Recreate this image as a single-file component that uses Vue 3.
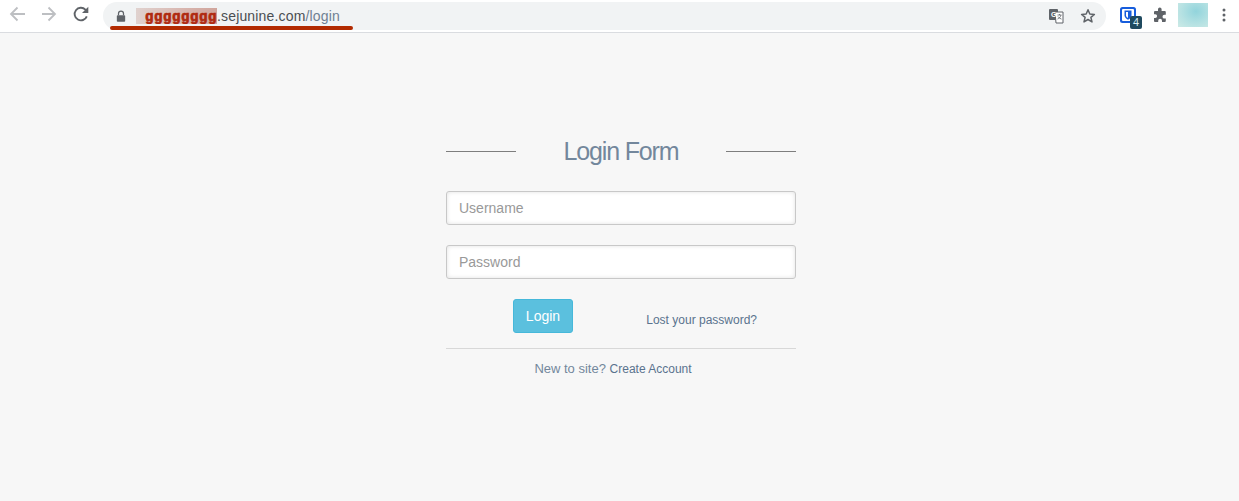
<template>
  <div class="page">
    <header class="toolbar">
      <div class="nav">
        <svg viewBox="0 0 18 18" width="18" height="18"><path d="M17 9H4M9.500 2.500L3 9l6.500 6.500" fill="none" stroke="#bdbfc2" stroke-width="1.800"/></svg>
        <svg viewBox="0 0 18 18" width="18" height="18"><path d="M2 9h13M8.500 2.500L15 9l-6.500 6.500" fill="none" stroke="#bdbfc2" stroke-width="1.800"/></svg>
        <svg viewBox="0 0 18 18" width="18" height="18"><path d="M14.800 11.400A6.300 6.300 0 1 1 13.400 4.600L15 6.200" fill="none" stroke="#5f6368" stroke-width="1.900"/><path d="M16.300 1.800V8H10z" fill="#5f6368"/></svg>
      </div>
      <div class="omnibox">
        <div class="url">
          <svg class="lock" viewBox="0 0 12 14" width="10" height="12"><path d="M3 6V4a3 3 0 0 1 6 0v2" fill="none" stroke="#5f6368" stroke-width="1.500"/><rect x="1" y="6" width="10" height="8" rx="1" fill="#5f6368"/></svg>
          <span class="mask"><span class="mask-text">gggggggg</span></span><span class="host">.sejunine.com</span><span class="path">/login</span>
        </div>
        <div class="omni-actions">
          <svg viewBox="0 0 16 16" width="16" height="16"><rect x="1" y="1" width="9" height="11" rx="1" fill="#5f6368"/><path d="M7 4h8v11H8z" fill="#fff" stroke="#5f6368"/><text x="3" y="9" class="tr-a">G</text><path d="M9.500 7h4M11.500 6v1M13 7c-.4 2-1.800 3.500-3.500 4M10 8.500c.8 1.300 2 2.200 3.500 2.600" fill="none" stroke="#5f6368" stroke-width=".8"/></svg>
          <svg viewBox="0 0 16 16" width="16" height="16"><path d="M8 1.800l1.800 4.200 4.600.4-3.500 3 1.100 4.500L8 11.500l-4 2.400 1.100-4.500-3.500-3 4.600-.4z" fill="none" stroke="#5f6368" stroke-width="1.500" stroke-linejoin="round"/></svg>
        </div>
      </div>
      <div class="extensions">
        <div class="shield-wrap">
          <svg viewBox="0 0 16 16" width="16" height="16"><rect width="16" height="16" rx="2.500" fill="#175ddc"/><rect x="2" y="2" width="12" height="12" rx="1" fill="#fff"/><path d="M4.500 3.500h7v5c0 2-1.800 3.300-3.500 4.200-1.700-.9-3.500-2.200-3.500-4.200z" fill="#175ddc"/><path d="M6 5h2v6c-1-.6-2-1.400-2-2.600z" fill="#fff"/></svg>
          <span class="badge">4</span>
        </div>
        <svg viewBox="0 0 16 16" width="16" height="16"><path d="M6 2.200a1.800 1.800 0 0 1 3.600 0V4h3.200a1 1 0 0 1 1 1v2.800h-1.400a1.900 1.900 0 0 0 0 3.800h1.400v2.400a1 1 0 0 1-1 1H10v-1.300a1.900 1.900 0 0 0-3.800 0V15H3a1 1 0 0 1-1-1v-3h1.200a1.900 1.900 0 0 0 0-3.800H2V5a1 1 0 0 1 1-1h3z" fill="#5f6368"/></svg>
        <div class="avatar"></div>
        <svg class="kebab" viewBox="0 0 4 16" width="4" height="16"><circle cx="2" cy="3" r="1.500" fill="#5f6368"/><circle cx="2" cy="8" r="1.500" fill="#5f6368"/><circle cx="2" cy="13" r="1.500" fill="#5f6368"/></svg>
      </div>
      <div class="underline"></div>
    </header>

    <main class="content">
      <form class="login" @submit.prevent>
        <div class="title-row">
          <span class="rule"></span>
          <h1>Login Form</h1>
          <span class="rule"></span>
        </div>
        <input class="field" type="text" placeholder="Username" />
        <input class="field" type="password" placeholder="Password" />
        <div class="actions">
          <button class="login-btn" type="submit">Login</button>
          <a class="lost" href="#">Lost your password?</a>
        </div>
        <div class="signup">New to site? <a href="#">Create Account</a></div>
      </form>
    </main>
  </div>
</template>

<script setup>
</script>

<style>
html, body {
  margin: 0;
  background: #f7f7f7;
}
</style>

<style scoped>
.page {
  height: 501px;
  overflow: hidden;
  display: flex;
  flex-direction: column;
  font-family: "Liberation Sans", Arial, sans-serif;
  background: #f7f7f7;
}

.toolbar {
  position: relative;
  display: flex;
  align-items: center;
  height: 32px;
  background: #fff;
  border-bottom: 1px solid #dadce0;
  flex-shrink: 0;
}

.nav {
  display: flex;
  align-items: center;
  gap: 14px;
  padding-left: 8px;
  width: 95px;
  box-sizing: border-box;
  margin-top: -4px;
}

.omnibox {
  width: 1003px;
  height: 28px;
  margin-top: -1px;
  margin-left: 8px;
  border-radius: 14px;
  background: #f1f3f4;
  display: flex;
  align-items: center;
  justify-content: space-between;
}

.url {
  display: flex;
  align-items: center;
  font-size: 14px;
  letter-spacing: 0.16px;
  padding-left: 13px;
}

.lock {
  margin-right: 10px;
}

.mask {
  display: inline-block;
  width: 81px;
  height: 16px;
  line-height: 16px;
  background: linear-gradient(90deg, #e0d2cf, #d8b5ae 60%, #d0a59c);
  text-align: right;
  overflow: hidden;
}

.mask-text {
  color: #b02a10;
  font-family: "Liberation Mono", monospace;
  font-weight: 700;
  font-size: 14px;
  letter-spacing: 0.6px;
  -webkit-text-stroke: 0.7px #b02a10;
}

.host {
  color: #4a4e52;
}

.path {
  color: #6f7f92;
}

.omni-actions {
  display: flex;
  align-items: center;
  gap: 16px;
  padding-right: 10px;
}

.tr-a {
  font-family: "Liberation Sans", sans-serif;
  font-size: 7px;
  font-weight: 700;
  fill: #fff;
}

.extensions {
  display: flex;
  align-items: center;
  margin-left: 14px;
  gap: 16px;
  margin-top: -3px;
}

.shield-wrap {
  position: relative;
  width: 16px;
  height: 16px;
}

.badge {
  position: absolute;
  left: 10px;
  top: 9px;
  width: 12px;
  height: 13px;
  background: #1f4a5f;
  color: #d8eef5;
  font-size: 11px;
  line-height: 13px;
  text-align: center;
  border-radius: 2px;
}

.avatar {
  width: 30px;
  height: 24px;
  margin-left: -6px;
  background: radial-gradient(ellipse at 60% 35%, #92d4dc, #b7e2e3 60%, #cdeae6);
}

.kebab {
  margin-left: -2px;
}

.underline {
  position: absolute;
  left: 110px;
  top: 26px;
  width: 243px;
  height: 4px;
  border-radius: 2px;
  background: #b22a00;
}

.content {
  flex: 1;
  display: flex;
  justify-content: center;
  padding-left: 3px;
}

.login {
  width: 350px;
  margin-top: 101px;
  display: flex;
  flex-direction: column;
}

.title-row {
  display: flex;
  align-items: center;
  justify-content: space-between;
  height: 34px;
  margin-bottom: 23px;
}

.rule {
  width: 70px;
  height: 1px;
  background: #7e7e7e;
}

h1 {
  margin: 0;
  font-size: 25px;
  font-weight: 400;
  letter-spacing: -1.15px;
  color: #73879c;
}

.field {
  display: block;
  box-sizing: border-box;
  width: 100%;
  height: 34px;
  padding: 0 12px;
  margin-bottom: 20px;
  border: 1px solid #c8c8c8;
  border-radius: 3px;
  background: #fff;
  box-shadow: inset 0 0 4px rgba(0, 0, 0, 0.12);
  font-family: inherit;
  font-size: 14px;
  outline: none;
}

.field::placeholder {
  color: #999;
  opacity: 1;
}

.actions {
  display: flex;
  align-items: flex-start;
  padding: 0 39px 0 67px;
  justify-content: space-between;
  height: 49px;
  border-bottom: 1px solid #d8d8d8;
}

.login-btn {
  width: 60px;
  height: 34px;
  border: 1px solid #46b8da;
  border-radius: 3px;
  background: #5bc0de;
  color: #fff;
  font-family: inherit;
  font-size: 14px;
  padding: 0;
}

.lost {
  margin-top: 14px;
  font-size: 12px;
  color: #5a738e;
  text-decoration: none;
}

.signup {
  margin-top: 12px;
  padding-right: 16px;
  text-align: center;
  font-size: 13px;
  line-height: 15px;
  color: #73879c;
}

.signup a {
  font-size: 12px;
  color: #5a738e;
  text-decoration: none;
}
</style>
